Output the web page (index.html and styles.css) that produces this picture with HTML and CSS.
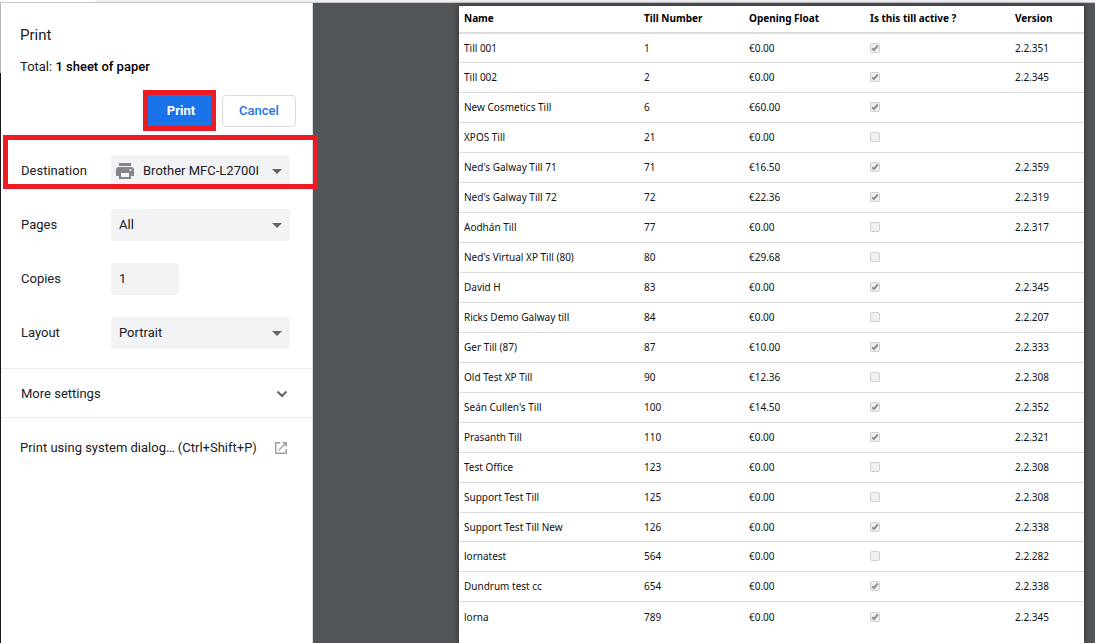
FILE: index.html
```html
<!DOCTYPE html>
<html lang="en">
<head>
<meta charset="utf-8">
<title>Print</title>
<link rel="stylesheet" href="styles.css">
</head>
<body>
<div class="strip"></div>
<main class="dialog">
  <div class="edge"></div>
  <form class="panel">
    <header class="head">
      <h1 class="title">Print</h1>
      <p class="total">Total: <b>1 sheet of paper</b></p>
      <div class="actions">
        <button type="button" class="btn primary">Print</button>
        <button type="button" class="btn">Cancel</button>
      </div>
    </header>
    <div class="settings">
      <div class="row marked">
        <label for="destination">Destination</label>
        <div class="field with-icon">
          <svg class="printer" viewBox="0 0 18 16" aria-hidden="true"><path fill="#80868b" d="M3 0h12v3H3zM3 4h12a3 3 0 0 1 3 3v6h-3v3H3v-3H0V7a3 3 0 0 1 3-3zm2 6v4h8v-4zm9.500-4a1 1 0 1 0 0 2 1 1 0 0 0 0-2z" fill-rule="evenodd"/></svg>
          <select id="destination"><option>Brother MFC-L2700I</option></select>
        </div>
      </div>
      <div class="row">
        <label for="pages">Pages</label>
        <div class="field"><select id="pages"><option>All</option></select></div>
      </div>
      <div class="row">
        <label for="copies">Copies</label>
        <div class="field"><input id="copies" type="text" value="1"></div>
      </div>
      <div class="row">
        <label for="layout">Layout</label>
        <div class="field"><select id="layout"><option>Portrait</option></select></div>
      </div>
    </div>
    <button type="button" class="more">More settings
      <svg width="12" height="8" viewBox="0 0 12 8" aria-hidden="true"><path d="M1.500 1.500 6 6l4.500-4.500" fill="none" stroke="#5f6368" stroke-width="2"/></svg>
    </button>
    <button type="button" class="system">Print using system dialog… (Ctrl+Shift+P)
      <svg width="12" height="12" viewBox="0 0 12 12" aria-hidden="true"><path d="M5 .7H.7v10.600h10.600V7M7.500.7h3.800v3.800M11 1 3.500 8.500" fill="none" stroke="#9aa0a6" stroke-width="1.400"/></svg>
    </button>
  </form>
  <section class="preview">
    <div class="sheet">
      <table class="tills">
        <colgroup><col class="c-name"><col class="c-number"><col class="c-float"><col class="c-active"><col></colgroup>
        <thead>
          <tr><th>Name</th><th>Till Number</th><th>Opening Float</th><th>Is this till active ?</th><th>Version</th></tr>
        </thead>
        <tbody>
          <tr><td>Till 001</td><td>1</td><td>€0.00</td><td><input type="checkbox" aria-label="Till 001 active" disabled checked></td><td>2.2.351</td></tr>
          <tr><td>Till 002</td><td>2</td><td>€0.00</td><td><input type="checkbox" aria-label="Till 002 active" disabled checked></td><td>2.2.345</td></tr>
          <tr><td>New Cosmetics Till</td><td>6</td><td>€60.00</td><td><input type="checkbox" aria-label="New Cosmetics Till active" disabled checked></td><td></td></tr>
          <tr><td>XPOS Till</td><td>21</td><td>€0.00</td><td><input type="checkbox" aria-label="XPOS Till active" disabled></td><td></td></tr>
          <tr><td>Ned's Galway Till 71</td><td>71</td><td>€16.50</td><td><input type="checkbox" aria-label="Ned's Galway Till 71 active" disabled checked></td><td>2.2.359</td></tr>
          <tr><td>Ned's Galway Till 72</td><td>72</td><td>€22.36</td><td><input type="checkbox" aria-label="Ned's Galway Till 72 active" disabled checked></td><td>2.2.319</td></tr>
          <tr><td>Aodhán Till</td><td>77</td><td>€0.00</td><td><input type="checkbox" aria-label="Aodhán Till active" disabled></td><td>2.2.317</td></tr>
          <tr><td>Ned's Virtual XP Till (80)</td><td>80</td><td>€29.68</td><td><input type="checkbox" aria-label="Ned's Virtual XP Till (80) active" disabled></td><td></td></tr>
          <tr><td>David H</td><td>83</td><td>€0.00</td><td><input type="checkbox" aria-label="David H active" disabled checked></td><td>2.2.345</td></tr>
          <tr><td>Ricks Demo Galway till</td><td>84</td><td>€0.00</td><td><input type="checkbox" aria-label="Ricks Demo Galway till active" disabled></td><td>2.2.207</td></tr>
          <tr><td>Ger Till (87)</td><td>87</td><td>€10.00</td><td><input type="checkbox" aria-label="Ger Till (87) active" disabled checked></td><td>2.2.333</td></tr>
          <tr><td>Old Test XP Till</td><td>90</td><td>€12.36</td><td><input type="checkbox" aria-label="Old Test XP Till active" disabled></td><td>2.2.308</td></tr>
          <tr><td>Seán Cullen's Till</td><td>100</td><td>€14.50</td><td><input type="checkbox" aria-label="Seán Cullen's Till active" disabled checked></td><td>2.2.352</td></tr>
          <tr><td>Prasanth Till</td><td>110</td><td>€0.00</td><td><input type="checkbox" aria-label="Prasanth Till active" disabled checked></td><td>2.2.321</td></tr>
          <tr><td>Test Office</td><td>123</td><td>€0.00</td><td><input type="checkbox" aria-label="Test Office active" disabled></td><td>2.2.308</td></tr>
          <tr><td>Support Test Till</td><td>125</td><td>€0.00</td><td><input type="checkbox" aria-label="Support Test Till active" disabled></td><td>2.2.308</td></tr>
          <tr class="short"><td>Support Test Till New</td><td>126</td><td>€0.00</td><td><input type="checkbox" aria-label="Support Test Till New active" disabled checked></td><td>2.2.338</td></tr>
          <tr><td>lornatest</td><td>564</td><td>€0.00</td><td><input type="checkbox" aria-label="lornatest active" disabled></td><td>2.2.282</td></tr>
          <tr><td>Dundrum test cc</td><td>654</td><td>€0.00</td><td><input type="checkbox" aria-label="Dundrum test cc active" disabled checked></td><td>2.2.338</td></tr>
          <tr><td>lorna</td><td>789</td><td>€0.00</td><td><input type="checkbox" aria-label="lorna active" disabled checked></td><td>2.2.345</td></tr>
        </tbody>
      </table>
    </div>
  </section>
</main>
</body>
</html>
```
FILE: styles.css
```css
* {
  box-sizing: border-box;
}

body {
  margin: 0;
  height: 100vh;
  display: flex;
  flex-direction: column;
  overflow: hidden;
  background: #fff;
  color: #202124;
  font: 13px/20px Roboto, sans-serif;
}

button,
input,
select {
  font: inherit;
  color: inherit;
}

.strip {
  flex: none;
  height: 3px;
  background: linear-gradient(90deg, #fff 95px, #f1f1f5 95px);
  border-bottom: 1px solid #c6c6ca;
}

.dialog {
  flex: 1;
  min-height: 0;
  display: flex;
}

.edge {
  width: 1px;
  background: linear-gradient(#b4b4b4 70px, #17181c 70px);
}

.panel {
  flex: none;
  width: 312px;
  border-right: 1px solid #dadce0;
}

.head {
  padding: 22px 16px 0 19px;
}

.title {
  margin: 0;
  font-size: 15px;
  line-height: 20px;
  font-weight: 400;
}

.total {
  margin: 12px 0 18px;
}

.total b {
  font-weight: 500;
  color: #000;
}

.actions {
  display: flex;
  justify-content: flex-end;
  gap: 11px;
}

.btn {
  width: 74px;
  height: 32px;
  padding: 0;
  border: 1px solid #dadce0;
  border-radius: 4px;
  background: #fff;
  color: #1a73e8;
  font-weight: 500;
}

.primary {
  width: 63px;
  height: 31px;
  padding-left: 3px;
  border: 0;
  border-radius: 0;
  outline: 5px solid #ed1c24;
  background: #1a73e8;
  color: #fff;
  font-weight: 700;
}

.settings {
  display: grid;
  gap: 22px;
  padding: 28px 22px 19px 20px;
}

.row {
  position: relative;
  display: flex;
  align-items: center;
  height: 32px;
}

.row label {
  width: 90px;
}

.marked::after {
  content: "";
  position: absolute;
  inset: -20px -28px -2px -18px;
  border: 5px solid #ed1c24;
  pointer-events: none;
}

.field {
  position: relative;
  flex: 1;
}

.field select,
.field input {
  display: block;
  width: 100%;
  height: 32px;
  padding: 0 30px 0 8px;
  border: 0;
  border-radius: 4px;
  background: #f1f3f4;
  appearance: none;
}

.field input {
  width: 68px;
  padding-bottom: 2px;
}

.field:has(select)::after {
  content: "";
  position: absolute;
  right: 8px;
  top: 14px;
  border: 5px solid transparent;
  border-top-color: #5f6368;
  border-bottom: 0;
  pointer-events: none;
}

.field.with-icon select {
  padding-left: 32px;
}

.printer {
  position: absolute;
  left: 5px;
  top: 8px;
  width: 18px;
  height: 16px;
}

.more,
.system {
  display: flex;
  align-items: center;
  justify-content: space-between;
  width: 100%;
  padding: 0 24px 0 20px;
  border: 0;
  background: none;
  text-align: left;
}

.more {
  height: 50px;
  padding-top: 1px;
  border-top: 1px solid #e8eaed;
  border-bottom: 1px solid #e8eaed;
}

.system {
  height: 60px;
  padding-left: 19px;
  padding-right: 25px;
}

.preview {
  flex: 1;
  min-width: 0;
  display: flex;
  padding: 3px 11px 0 146px;
  background: #525659;
}

.sheet {
  flex: 1;
  background: #fff;
  box-shadow: 0 0 6px rgba(0, 0, 0, .5);
}

.tills {
  width: 100%;
  table-layout: fixed;
  border-collapse: separate;
  border-spacing: 0;
  color: #111;
  font: 10px/16px "Noto Sans", "Open Sans", sans-serif;
}

.c-name { width: 180px; }
.c-number { width: 105px; }
.c-float { width: 121px; }
.c-active { width: 145px; }

.tills th,
.tills td {
  height: 30px;
  padding: 0 0 1px 5px;
  border-bottom: 1px solid #ddd;
  text-align: left;
  white-space: nowrap;
}

.tills th {
  height: 28px;
  padding-bottom: 2px;
  border-bottom-width: 2px;
  color: #000;
  font-weight: 700;
}

.tills tr:first-child td,
.tills .short td {
  height: 29px;
}

.tills tr:last-child td {
  border-bottom: 0;
}

.tills input {
  display: block;
  width: 10px;
  height: 10px;
  margin: 0;
  border: 1px solid #d0d0d0;
  border-radius: 2px;
  appearance: none;
  background: #f0f0f0;
}

.tills input:checked {
  background: #f0f0f0 url("data:image/svg+xml,%3Csvg xmlns='http://www.w3.org/2000/svg' viewBox='0 0 8 8'%3E%3Cpath d='M1.200 4.200 3 6 6.800 1.500' fill='none' stroke='%23909090' stroke-width='2'/%3E%3C/svg%3E") center / 8px 8px no-repeat;
}
```
